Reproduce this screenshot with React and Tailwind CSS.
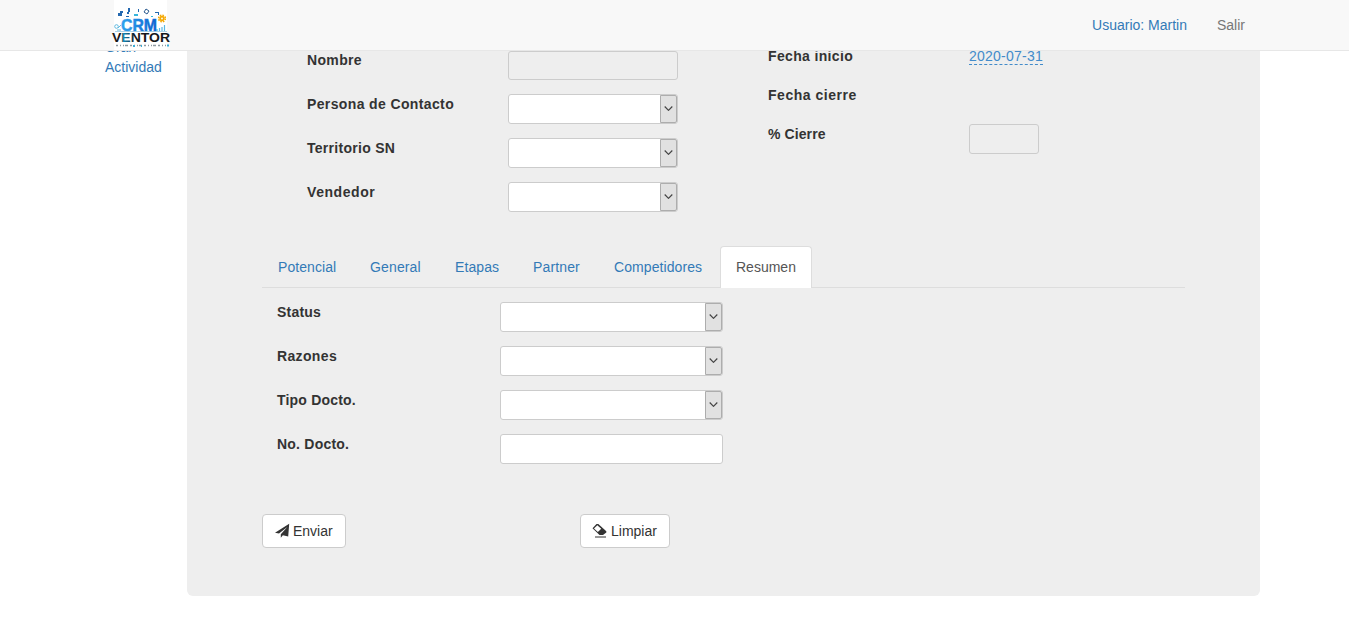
import React from 'react';

function Logo() {
  return (
    <svg className="block h-[50px] w-[66px]" viewBox="0 0 66 50" fontFamily="Liberation Sans, sans-serif">
      <defs>
        <linearGradient id="word" x1="0" x2="1" y1="0" y2="0">
          <stop offset="0" stopColor="#2fa4ee" />
          <stop offset="1" stopColor="#0b62d0" />
        </linearGradient>
        <linearGradient id="brand" x1="0" x2="1" y1="0" y2="0">
          <stop offset="0" stopColor="#15181b" />
          <stop offset=".17" stopColor="#15181b" />
          <stop offset=".19" stopColor="#128cc0" />
          <stop offset=".34" stopColor="#173a4c" />
          <stop offset=".38" stopColor="#15181b" />
          <stop offset="1" stopColor="#15181b" />
        </linearGradient>
      </defs>
      <rect x="6" y="0" width="53" height="50" fill="#fff" />
      <g fill="#2468b0">
        <path d="M10 13h4v3h-4zM12 11h3v2h-3zM20 8h2v4h-1v2h-2v-2h1z" />
        <rect x="26" y="14" width="4" height="2" fill="#37b5dc" />
        <rect x="18" y="16" width="3" height="1" />
        <rect x="30" y="9" width="1" height="3" />
        <path d="M47 12h4v3h-1v-2h-3z" />
        <rect x="43" y="16" width="2" height="1" fill="#37b5dc" />
      </g>
      <path d="M38 9l3 2-2 3-3-2z" fill="none" stroke="#2b5b8f" strokeWidth="1" />
      <circle cx="54" cy="18.500" r="1.800" fill="none" stroke="#f5a800" strokeWidth="1.800" />
      <circle cx="54" cy="18.500" r="3.400" fill="none" stroke="#f5a800" strokeWidth="1.400" strokeDasharray="1.600 1.070" />
      <circle cx="8.500" cy="26.500" r="1.800" fill="none" stroke="#60b9df" />
      <path d="M10 28l3-3M9 30h4" fill="none" stroke="#60b9df" />
      <path d="M49 31v-2M51.500 31v-3M54 31v-4M56.500 31v-6" stroke="#59b8e5" strokeWidth="1.200" />
      <text x="13" y="31" fontSize="17" fontWeight="700" fill="url(#word)" stroke="url(#word)" strokeWidth=".5" textLength="36" lengthAdjust="spacingAndGlyphs">CRM</text>
      <path d="M7 31.500h52" stroke="#86bede" strokeWidth=".7" />
      <text x="4" y="42" fontSize="12" fontWeight="700" fill="url(#brand)" textLength="58" lengthAdjust="spacingAndGlyphs">VENTOR</text>
      <path d="M8 45.500h51" stroke="#8f9aa1" strokeWidth="1.500" strokeDasharray="2 2 1 2 1 1 3 2" />
      <path d="M25 46h2M33 46h1M59 45.500h2" stroke="#3aaed8" strokeWidth="2" />
    </svg>
  );
}

function Select({ width }) {
  return (
    <div className={`flex h-[30px] justify-end rounded-[3px] border border-[#ccc] bg-white ${width}`}>
      <button aria-label="Abrir" className="flex w-[17px] items-center justify-center rounded-r-[2px] border border-[#adadad] bg-[#e1e1e1]">
        <svg className="-mt-px h-[5px] w-[9px] shrink-0" viewBox="0 0 9 5" fill="none" stroke="#444" strokeWidth="1.200">
          <path d="M.7.5l3.800 3.800L8.300.5" />
        </svg>
      </button>
    </div>
  );
}

function Label({ children, className = '' }) {
  return <label className={`shrink-0 font-bold text-[#333] ${className}`}>{children}</label>;
}

const contactFields = [
  ['Persona de Contacto', 'tracking-[0.37px]'],
  ['Territorio SN', 'tracking-[0.28px]'],
  ['Vendedor', 'tracking-[0.57px]'],
];

const summaryFields = [
  ['Status', 'tracking-[0.2px]'],
  ['Razones', 'tracking-[0.35px]'],
  ['Tipo Docto.', 'tracking-[0.2px]'],
];

const tabs = [
  ['Potencial', 'w-[90px] tracking-[0.07px]'],
  ['General', 'w-[83px] tracking-[0.14px]'],
  ['Etapas', 'w-[76px] tracking-[0.1px]'],
  ['Partner', 'w-[79px] tracking-[0.14px]'],
  ['Competidores', 'w-[120px] tracking-[0.08px]'],
];

export default function App() {
  return (
    <div className="flex h-[626px] flex-col overflow-hidden bg-white font-['Liberation_Sans',sans-serif] text-[14px] leading-5 text-[#333]">
      <header className="flex h-[51px] shrink-0 border-b border-[#e7e7e7] bg-[#f8f8f8] pl-[108px] pr-[104px]">
        <Logo />
        <nav className="ml-auto flex gap-[30px] pt-[15px]">
          <a className="text-[#337ab7]">Usuario: Martin</a>
          <a className="text-[#777]">Salir</a>
        </nav>
      </header>
      <div className="flex min-h-0 flex-1 overflow-hidden">
        <aside className="w-[187px] shrink-0 pl-[105px] text-[#337ab7]">
          <a className="-mt-[14px] block w-[70px]">Gran Actividad</a>
        </aside>
        <main className="h-[545px] w-[1073px] rounded-b-[6px] bg-[#eee] pl-[75px]">
          <div className="flex h-[195px]">
            <section className="flex w-[461px] flex-col gap-[14px] pl-[45px]">
              <div className="flex h-[29px]">
                <Label className="-mt-px w-[201px] tracking-[0.35px]">Nombre</Label>
                <div className="h-[29px] w-[170px] rounded-[3px] border border-[#ccc] bg-[#eee]" />
              </div>
              {contactFields.map(([label, tracking]) => (
                <div className="flex h-[30px]" key={label}>
                  <Label className={`w-[201px] ${tracking}`}>{label}</Label>
                  <Select width="w-[170px]" />
                </div>
              ))}
            </section>
            <section className="flex flex-col pl-[45px]">
              <div className="-mt-[5px] flex h-[39px]">
                <Label className="w-[201px] tracking-[0.35px]">Fecha inicio</Label>
                <a className="h-[19px] w-[74px] border-b border-dashed border-[#428bca] tracking-[0.24px] text-[#428bca]">2020-07-31</a>
              </div>
              <div className="h-[39px]"><Label className="tracking-[0.53px]">Fecha cierre</Label></div>
              <div className="flex">
                <Label className="w-[201px] tracking-[0.1px]">% Cierre</Label>
                <div className="h-[30px] w-[70px] rounded-[3px] border border-[#ccc]" />
              </div>
            </section>
          </div>
          <nav className="flex h-[42px] w-[923px] border-b border-[#ddd]">
            {tabs.map(([name, style]) => (
              <a key={name} className={`mr-[2px] h-[42px] pl-4 pt-[11px] text-[#337ab7] ${style}`}>{name}</a>
            ))}
            <a className="h-[42px] w-[92px] rounded-t-[4px] border border-b-0 border-[#ddd] bg-white pl-[15px] pt-[10px] text-[#555]">Resumen</a>
          </nav>
          <section className="mt-[14px] flex flex-col gap-[14px] pl-[15px]">
            {summaryFields.map(([label, tracking]) => (
              <div className="flex h-[30px]" key={label}>
                <Label className={`w-[223px] ${tracking}`}>{label}</Label>
                <Select width="w-[223px]" />
              </div>
            ))}
            <div className="flex h-[30px]">
              <Label className="w-[223px] tracking-[0.22px]">No. Docto.</Label>
              <input aria-label="No. Docto." className="h-[30px] w-[223px] rounded-[3px] border border-[#ccc] bg-white" />
            </div>
          </section>
          <div className="mt-[50px] flex gap-[234px]">
            <button className="flex h-[34px] w-[84px] items-center rounded-[4px] border border-[#ccc] bg-white pl-3">
              <svg className="-mt-[2px] mr-[3px] h-[15px] w-[15px]" viewBox="0 0 15 15">
                <path d="M14.200 .8L0 9.800l4 .8L12.300 4 5.800 11.300v3.400l2.100-2.500 5.300 1.300z" fill="#333" />
              </svg>
              Enviar
            </button>
            <button className="flex h-[34px] w-[90px] items-center rounded-[4px] border border-[#ccc] bg-white pl-[11px]">
              <svg className="-mt-[2px] mr-1 h-[15px] w-[15px]" viewBox="0 0 15 15">
                <path d="M.5 5.200L4.500 1h1.800l8 7.300v1.300L11 12H7.500z" fill="#333" />
                <path d="M2 5.400L5.300 2.200l3.900 3.600-3.300 3.300z" fill="#fff" />
                <path d="M3 14h11" stroke="#333" />
              </svg>
              Limpiar
            </button>
          </div>
        </main>
      </div>
    </div>
  );
}
